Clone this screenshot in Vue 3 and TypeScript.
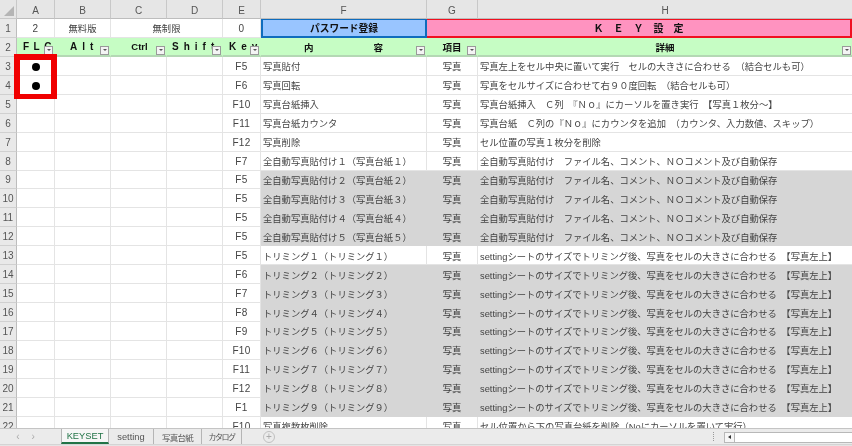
<script setup lang="ts">
interface Row {
  no: number;
  key: string;
  name: string;
  kind: string;
  detail: string;
  grey?: boolean;
  mark?: boolean;
}

const columns = ["A", "B", "C", "D", "E", "F", "G", "H"];

const auto = "全自動写真貼付け　ファイル名、コメント、ＮＯコメント及び自動保存";
const trim = "settingシートのサイズでトリミング後、写真をセルの大きさに合わせる　【写真左上】";
const zen = ["１", "２", "３", "４", "５", "６", "７", "８", "９"];
const trimKeys = ["F5", "F6", "F7", "F8", "F9", "F10", "F11", "F12", "F1"];

const rows: Row[] = [
  { no: 3, key: "F5", name: "写真貼付", kind: "写真", detail: "写真左上をセル中央に置いて実行　セルの大きさに合わせる　（結合セルも可）", mark: true },
  { no: 4, key: "F6", name: "写真回転", kind: "写真", detail: "写真をセルサイズに合わせて右９０度回転　（結合セルも可）", mark: true },
  { no: 5, key: "F10", name: "写真台紙挿入", kind: "写真", detail: "写真台紙挿入　Ｃ列　『Ｎｏ』にカーソルを置き実行　【写真１枚分～】" },
  { no: 6, key: "F11", name: "写真台紙カウンタ", kind: "写真", detail: "写真台紙　Ｃ列の『Ｎｏ』にカウンタを追加　（カウンタ、入力数値、スキップ）" },
  { no: 7, key: "F12", name: "写真削除", kind: "写真", detail: "セル位置の写真１枚分を削除" },
  { no: 8, key: "F7", name: "全自動写真貼付け１（写真台紙１）", kind: "写真", detail: auto },
  ...[2, 3, 4, 5].map((n, i) => ({
    no: 9 + i,
    key: "F5",
    name: `全自動写真貼付け${zen[n - 1]}（写真台紙${zen[n - 1]}）`,
    kind: "写真",
    detail: auto,
    grey: true,
  })),
  ...trimKeys.map((key, i) => ({
    no: 13 + i,
    key,
    name: `トリミング${zen[i]}（トリミング${zen[i]}）`,
    kind: "写真",
    detail: trim,
    grey: i > 0,
  })),
  { no: 22, key: "F10", name: "写真複数枚削除", kind: "写真", detail: "セル位置から下の写真台紙を削除（Noにカーソルを置いて実行）" },
];

const tabs = ["KEYSET", "setting", "写真台紙", "カタログ"];
</script>

<template>
  <div class="app">
    <div class="sheet">
      <div class="corner"><span class="corner__mark"></span></div>
      <div
        v-for="c in columns"
        :key="c"
        class="col-head"
        :class="{ 'col-head--last': c === 'H' }"
      >{{ c }}</div>

      <div class="row-head">1</div>
      <div class="cell center num">2</div>
      <div class="cell center">無料版</div>
      <div class="cell center span-2">無制限</div>
      <div class="cell center num">0</div>
      <div class="cell banner banner--blue">パスワード登録</div>
      <div class="cell banner banner--pink">Ｋ　Ｅ　Ｙ　設　定</div>

      <div class="row-head">2</div>
      <div class="cell title title--flc"><span class="wide wide--tight">FLC</span><i class="drop"></i></div>
      <div class="cell title title--alt"><span class="wide">Alt</span><i class="drop"></i></div>
      <div class="cell title"><span class="latin">Ctrl</span><i class="drop"></i></div>
      <div class="cell title title--shift"><span class="wide">Shift</span><i class="drop"></i></div>
      <div class="cell title title--key"><span class="wide">Key</span><i class="drop"></i></div>
      <div class="cell title"><span class="split"><b>内</b><b>容</b></span><i class="drop"></i></div>
      <div class="cell title"><span>項目</span><i class="drop"></i></div>
      <div class="cell title cell--end"><span>詳細</span><i class="drop"></i></div>

      <template v-for="r in rows" :key="r.no">
        <div class="row-head">{{ r.no }}</div>
        <div class="cell center"><span v-if="r.mark" class="dot"></span></div>
        <div class="cell"></div>
        <div class="cell"></div>
        <div class="cell"></div>
        <div class="cell center num">{{ r.key }}</div>
        <div class="cell text" :class="{ grey: r.grey }">{{ r.name }}</div>
        <div class="cell center kind" :class="{ grey: r.grey }">{{ r.kind }}</div>
        <div class="cell text text--detail cell--end" :class="{ grey: r.grey }">{{ r.detail }}</div>
      </template>

      <div class="flag"></div>
    </div>

    <div class="tabbar">
      <div class="tabbar__nav">
        <span class="chev">‹</span>
        <span class="chev">›</span>
      </div>
      <div
        v-for="(t, i) in tabs"
        :key="t"
        class="tab"
        :class="{ 'tab--on': i === 0 }"
      >{{ t }}</div>
      <div class="tabbar__add">+</div>
      <div class="tabbar__grip"></div>
      <div class="tabbar__scroll">
        <span class="tabbar__btn"></span>
      </div>
    </div>
  </div>
</template>

<style>
html,
body {
  margin: 0;
  overflow: hidden;
  background: #fff;
}
</style>

<style scoped>
.app {
  position: relative;
  width: 852px;
  height: 446px;
  overflow: hidden;
  background: #e4e4e4;
  font-family: "Noto Sans CJK JP", "Liberation Sans", sans-serif;
  font-size: 9.3px;
  color: #444;
  filter: blur(0.4px);
}

.sheet {
  position: relative;
  display: grid;
  grid-template-columns: 17px 38px 56px 56px 56px 38px 166px 51px 372px 2px;
  grid-template-rows: 19px repeat(22, 18.95px);
  height: 428px;
  overflow: hidden;
  background: #fff;
}

.corner,
.col-head,
.row-head {
  display: flex;
  align-items: center;
  justify-content: center;
  background: #e6e6e6;
  box-sizing: border-box;
  font-family: "Liberation Sans", sans-serif;
  font-size: 10px;
  color: #555;
}

.corner {
  position: relative;
  border-right: 1px solid #c8c8c8;
  border-bottom: 1px solid #c8c8c8;
}

.corner__mark {
  position: absolute;
  right: 2px;
  bottom: 2px;
  border-style: solid;
  border-width: 0 0 10px 10px;
  border-color: transparent transparent #b5b5b5 transparent;
}

.col-head {
  padding-top: 2px;
  border-right: 1px solid #c8c8c8;
  border-bottom: 1px solid #bdbdbd;
}

.col-head--last {
  grid-column: 9 / span 2;
  border-right: 0;
}

.row-head {
  grid-column: 1;
  padding-top: 1px;
  background: #e9e9e9;
  border-right: 1px solid #bdbdbd;
  border-bottom: 1px solid #d0d0d0;
}

.cell {
  min-width: 0;
  box-sizing: border-box;
  padding-top: 1px;
  border-right: 1px solid #e4e4e4;
  border-bottom: 1px solid #e4e4e4;
  display: flex;
  align-items: center;
  white-space: nowrap;
  overflow: hidden;
  background: #fff;
}

.cell--end {
  grid-column: span 2;
  border-right: 0;
}

.center {
  justify-content: center;
}

.num {
  font-family: "Liberation Sans", sans-serif;
  font-size: 10px;
  letter-spacing: 0.3px;
}

.span-2 {
  grid-column: span 2;
}

.text {
  padding-left: 2px;
}

.text--detail {
  font-family: "Liberation Sans", "Noto Sans CJK JP", sans-serif;
}

.kind {
  color: #3a3a3a;
}

.grey {
  background: #d6d6d6;
  border-color: #d6d6d6;
}

.banner {
  justify-content: center;
  padding-top: 0;
  font-weight: 700;
  color: #111;
}

.banner--blue {
  font-size: 9.7px;
  background: #99c5ff;
  border: 2px solid #0f6cbd;
  border-top-width: 1px;
}

.banner--pink {
  grid-column: span 3;
  font-size: 10px;
  background: #ff93c0;
  border: 2px solid #f01020;
  border-top-width: 1px;
  border-left: 0;
}

.title {
  position: relative;
  justify-content: center;
  padding-top: 1px;
  background: #c6fdc4;
  border-color: #c6fdc4;
  border-bottom: 2px solid #b4d8b4;
  color: #111;
  font-weight: 700;
  font-size: 9.5px;
}

.title--flc,
.title--alt,
.title--shift,
.title--key {
  justify-content: flex-start;
}

.title--flc {
  padding-left: 6px;
}

.title--alt {
  padding-left: 15px;
}

.title--shift {
  padding-left: 5px;
}

.title--key {
  padding-left: 6px;
}

.wide,
.latin {
  font-family: "Liberation Sans", sans-serif;
  font-size: 10px;
}

.latin {
  margin-left: 2px;
  font-size: 9.5px;
}

.wide {
  letter-spacing: 5px;
}

.wide--tight {
  letter-spacing: 4.5px;
}

.split {
  display: flex;
  justify-content: space-between;
  width: 79px;
}

.split b {
  font-weight: 700;
}

.drop {
  position: absolute;
  right: 1px;
  bottom: 0;
  width: 9px;
  height: 9px;
  box-sizing: border-box;
  background: #f4f4f4;
  border: 1px solid #9a9a9a;
}

.drop::after {
  content: "";
  position: absolute;
  left: 1.5px;
  top: 2.5px;
  border-style: solid;
  border-width: 2.5px 2px 0;
  border-color: #555 transparent transparent;
}

.dot {
  width: 8px;
  height: 8px;
  margin-top: 1px;
  border-radius: 50%;
  background: #000;
}

.flag {
  position: absolute;
  left: 14px;
  top: 54px;
  width: 43px;
  height: 45px;
  box-sizing: border-box;
  border: 6px solid #f00000;
  border-bottom-width: 5px;
}

.tabbar {
  display: flex;
  align-items: stretch;
  height: 15px;
  background: #ebebeb;
  border-top: 1px solid #c4c4c4;
  border-bottom: 1px solid #d4d4d4;
  font-size: 9.3px;
  font-family: "Liberation Sans", "Noto Sans CJK JP", sans-serif;
  color: #555;
}

.tabbar__nav {
  width: 61px;
  padding-right: 10px;
  box-sizing: border-box;
  display: flex;
  justify-content: center;
  gap: 12px;
  align-items: center;
  color: #aaa;
}

.chev {
  font-family: "Liberation Sans", sans-serif;
  font-size: 10px;
}

.tab {
  display: flex;
  align-items: center;
  justify-content: center;
  box-sizing: border-box;
  border-right: 1px solid #b5b5b5;
}

.tab:nth-child(3) {
  width: 45px;
}

.tab:nth-child(4) {
  width: 48px;
  font-size: 8.5px;
  letter-spacing: -0.7px;
}

.tab:nth-child(5) {
  width: 40px;
  font-size: 8px;
  letter-spacing: -1.5px;
}

.tab--on {
  width: 48px;
  background: #f6f6f6;
  color: #217346;
  border-left: 1px solid #b5b5b5;
  border-bottom: 2px solid #217346;
}

.tabbar__add {
  width: 10px;
  height: 10px;
  margin: 2px 0 0 21px;
  border: 1px solid #c0c0c0;
  border-radius: 50%;
  color: #aaa;
  font-size: 10px;
  line-height: 9px;
  text-align: center;
}

.tabbar__grip {
  width: 1px;
  height: 9px;
  margin: 3px 0 0 auto;
  border-left: 1px dotted #999;
}

.tabbar__scroll {
  position: relative;
  width: 127px;
  height: 9px;
  margin: 3px 0 0 9px;
  background: #fff;
  border: 1px solid #b8b8b8;
  border-right: 0;
}

.tabbar__btn {
  position: absolute;
  left: 0;
  top: 0;
  width: 9px;
  height: 9px;
  background: #f6f6f6;
  border-right: 1px solid #b8b8b8;
}

.tabbar__btn::after {
  content: "";
  position: absolute;
  left: 3px;
  top: 2px;
  border-style: solid;
  border-width: 2.5px 3px 2.5px 0;
  border-color: transparent #333 transparent transparent;
}
</style>
